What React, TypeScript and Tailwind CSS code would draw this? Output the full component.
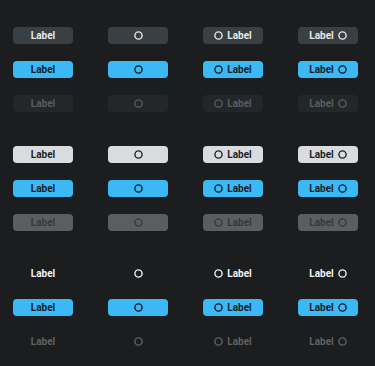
type Variant = "default" | "primary" | "disabled";
type Tone = "solid" | "light" | "ghost";

const STYLES: Record<Tone, Record<Variant, string>> = {
  solid: {
    default: "bg-[#3a3f43] text-[#e6e8ea]",
    primary: "bg-[#3cb9f5] text-[#0f1c26]",
    disabled: "bg-[#23272a] text-[#575d61]",
  },
  light: {
    default: "bg-[#d9dcdf] text-[#1f2326]",
    primary: "bg-[#3cb9f5] text-[#0f1c26]",
    disabled: "bg-[#5b5e61] text-[#36393b]",
  },
  ghost: {
    default: "bg-transparent text-[#f1f2f3]",
    primary: "bg-[#3cb9f5] text-[#0f1c26]",
    disabled: "bg-transparent text-[#5e6265]",
  },
};

function Ring() {
  return (
    <svg width="9" height="9" viewBox="0 0 9 9" fill="none" className="block shrink-0">
      <circle cx="4.5" cy="4.5" r="3.6" stroke="currentColor" strokeWidth="1.4" />
    </svg>
  );
}

function Btn({ cls, kind }: { cls: string; kind: "text" | "icon" | "left" | "right" }) {
  return (
    <div
      className={`flex h-[17px] w-[60px] items-center justify-center gap-[4px] rounded-[4px] text-[10px] font-bold leading-none ${cls}`}
    >
      {(kind === "icon" || kind === "left") && <Ring />}
      {kind !== "icon" && <span className="block">Label</span>}
      {kind === "right" && <Ring />}
    </div>
  );
}

const KINDS = ["text", "icon", "left", "right"] as const;

export default function App() {
  const tones: Tone[] = ["solid", "light", "ghost"];
  const variants: Variant[] = ["default", "primary", "disabled"];
  return (
    <div
      className="flex h-[366px] w-[375px] flex-col gap-[34px] bg-[#1c1d1f] pl-[13px] pt-[27px]"
      style={{ fontFamily: "Roboto, 'Liberation Sans', sans-serif" }}
    >
      {tones.map((tone) => (
        <div key={tone} className="flex flex-col gap-[17px]">
          {variants.map((v) => (
            <div key={v} className="flex gap-[35px]">
              {KINDS.map((k) => (
                <Btn key={k} kind={k} cls={STYLES[tone][v]} />
              ))}
            </div>
          ))}
        </div>
      ))}
    </div>
  );
}
